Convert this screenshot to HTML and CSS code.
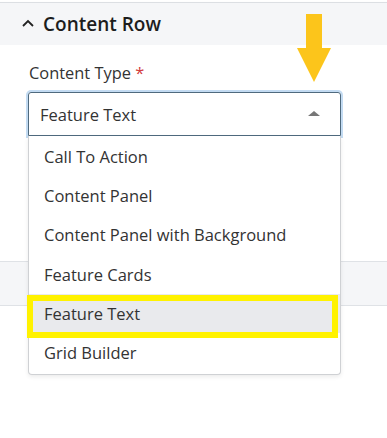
FILE: index.html
```html
<!DOCTYPE html>
<html>
<head>
<meta charset="utf-8">
<title>Content Row</title>
<link rel="stylesheet" href="styles.css">
</head>
<body>
<div class="panel">
  <div class="section-head">
    <svg class="chevron" width="12" height="8" viewBox="0 0 12 8"><polyline points="1,7 6,2 11,7" fill="none" stroke="#222" stroke-width="1.8"/></svg>
    <span class="section-title">Content Row</span>
  </div>
  <div class="section-body">
    <div class="field-label">Content Type <span class="req">*</span></div>
    <div class="select">
      <span class="select-value">Feature Text</span>
      <span class="caret"></span>
      <ul class="options">
        <li>Call To Action</li>
        <li>Content Panel</li>
        <li>Content Panel with Background</li>
        <li>Feature Cards</li>
        <li class="active">Feature Text<span class="mark"></span></li>
        <li>Grid Builder</li>
      </ul>
    </div>
  </div>
  <div class="section-head closed"></div>
  <div class="section-rest"></div>
</div>

<svg class="pointer" width="34" height="68" viewBox="0 0 34 68"><polygon points="9,0 25,0 25,34 34,34 17,68 0,34 9,34" fill="#fcc51b"/></svg>
</body>
</html>
```

FILE: styles.css
```css
body {
  margin: 0;
  background: #fff;
  font-family: "Open Sans", "Noto Sans", sans-serif;
  color: #333;
}

.panel {
  margin-top: 2px;
  border-top: 1px solid #dcdfe3;
  background: #fff;
  box-shadow: 0 4px 5px rgba(0, 0, 0, 0.16);
}

.section-head {
  height: 42px;
  background: #f5f6f8;
  display: flex;
  align-items: center;
  padding-left: 22px;
  gap: 9px;
}

.section-head.closed {
  height: 43px;
  border-top: 1px solid #dfe2e6;
  border-bottom: 1px solid #dfe2e6;
}

.section-title {
  font-size: 19px;
  font-weight: 600;
  color: #1d1d1d;
}

.chevron {
  margin-top: -2px;
}

.section-body {
  height: 198px;
  padding: 18px 0 0 28px;
}

.field-label {
  font-size: 16.4px;
  line-height: 20px;
  margin-left: 1px;
  margin-bottom: 9px;
}

.req {
  color: #d23b3b;
}

.select {
  position: relative;
  height: 42px;
  width: 300px;
  border: 1px solid #4f6a7e;
  border-radius: 3px 3px 0 0;
  box-shadow: 0 0 0 2px #c3dbf2;
  display: flex;
  align-items: center;
  padding-left: 11px;
}

.select-value {
  font-size: 16.5px;
  flex: 1;
}

.caret {
  width: 0;
  height: 0;
  border-left: 6px solid transparent;
  border-right: 6px solid transparent;
  border-bottom: 5px solid #777;
  margin-right: 20px;
  margin-top: -1px;
}

.options {
  position: absolute;
  top: 43px;
  left: -1px;
  width: 311px;
  margin: 0;
  padding: 1px 0 2px;
  list-style: none;
  background: #fff;
  border: 1px solid #cfd1d4;
  border-top: none;
  border-radius: 0 0 4px 4px;
  box-shadow: 0 2px 4px rgba(0, 0, 0, 0.08);
  z-index: 2;
}

.options li {
  position: relative;
  height: 39.2px;
  line-height: 40px;
  padding-left: 15px;
  font-size: 16.5px;
}

.options li.active {
  background: #e9eaed;
}

.mark {
  position: absolute;
  left: -2px;
  top: 1px;
  width: 299px;
  height: 31px;
  border: 6px solid #fff200;
}

.section-rest {
  height: 99px;
}

.pointer {
  position: absolute;
  left: 297px;
  top: 14px;
}
```
